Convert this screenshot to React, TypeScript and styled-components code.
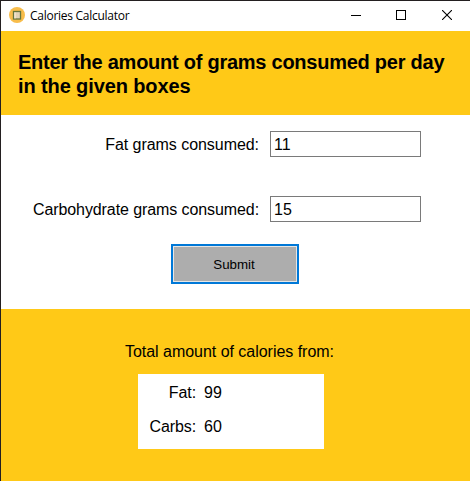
import React, { useState } from "react";
import styled, { createGlobalStyle } from "styled-components";

const GlobalStyle = createGlobalStyle`
  * { box-sizing: border-box; }
  body { margin: 0; overflow: hidden; }
`;

const Window = styled.div`
  display: flex;
  flex-direction: column;
  width: 470px;
  height: 481px;
  border: solid #231f20;
  border-width: 1px 0 0 1px;
  background: #fff;
  color: #000;
  font: 16px/20px "Liberation Sans", Arial, sans-serif;
`;

const TitleBar = styled.div`
  display: flex;
  align-items: center;
  height: 30px;
  flex: none;
  padding-left: 8px;
`;

const Title = styled.span`
  flex: 1;
  margin-left: 5px;
  font: 12px/16px "Open Sans", "Noto Sans", sans-serif;
  letter-spacing: -0.27px;
`;

const WindowButton = styled.button<{ $nudge?: number }>`
  display: grid;
  place-items: center;
  width: 46px;
  height: 30px;
  padding: 0 0 2px ${(p) => p.$nudge ?? 0}px;
  border: 0;
  background: none;
`;

const Header = styled.header`
  flex: none;
  height: 84px;
  padding: 19px 0 0 17px;
  background: #ffc917;
`;

const Heading = styled.h1`
  margin: 0;
  font-size: 20px;
  line-height: 24px;
  font-weight: bold;
  white-space: nowrap;
`;

const HeadingLine = styled.span<{ $tracking: number }>`
  display: block;
  letter-spacing: ${(p) => p.$tracking}px;
`;

const Form = styled.form`
  flex: none;
  display: flex;
  flex-direction: column;
  height: 194px;
  padding-top: 16px;
`;

const Field = styled.div`
  display: grid;
  grid-template-columns: 258px 151px;
  column-gap: 11px;
  height: 26px;
  margin-bottom: 39px;
  align-items: center;

  & + & {
    margin-bottom: 22px;
  }
`;

const Label = styled.label<{ $tracking: number }>`
  padding-top: 2px;
  text-align: right;
  white-space: nowrap;
  letter-spacing: ${(p) => p.$tracking}px;
`;

const Input = styled.input`
  width: 151px;
  height: 26px;
  padding: 2px 3px 0;
  border: 1px solid #7a7a7a;
  border-radius: 0;
  outline: 0;
  background: #fff;
  color: #000;
  font: inherit;
`;

const Submit = styled.button`
  width: 128px;
  height: 40px;
  margin-left: 170px;
  padding: 0 2px 0 0;
  border: 2px solid #0078d7;
  box-shadow: inset 0 0 0 1px #e6e6e6;
  background: #adadad;
  color: #000;
  font: 13.33px "Liberation Sans", Arial, sans-serif;
`;

const Results = styled.section`
  flex: 1;
  padding-top: 33px;
  background: #ffc917;
`;

const ResultsTitle = styled.div`
  margin: 0 0 12px 124px;
  white-space: nowrap;
  letter-spacing: -0.03px;
`;

const ResultsBox = styled.dl`
  display: grid;
  grid-template-columns: 58px 1fr;
  grid-auto-rows: 34px;
  column-gap: 8px;
  width: 186px;
  height: 75px;
  margin: 0 0 0 137px;
  padding-top: 2px;
  background: #fff;
  line-height: 34px;
`;

const Term = styled.dt`
  text-align: right;
  letter-spacing: -0.1px;
`;

const Value = styled.dd`
  margin: 0;
`;

const AppLogo = styled.svg`
  flex: none;
  margin-bottom: 2px;
`;

const AppIcon = () => (
  <AppLogo width="16" height="16" viewBox="0 0 16 16">
    <circle cx="8" cy="8" r="8" fill="#f8bd4b" />
    <rect x="4.5" y="4.5" width="7" height="7.5" fill="#e3d3b8" stroke="#66763c" strokeWidth="1.3" />
    <path d="M6 5.5v6" stroke="#fff2dc" />
  </AppLogo>
);

export default function App() {
  const [fat, setFat] = useState("11");
  const [carbs, setCarbs] = useState("15");
  const [totals, setTotals] = useState({ fat: 99, carbs: 60 });

  const submit = (e: React.FormEvent) => {
    e.preventDefault();
    setTotals({ fat: Number(fat) * 9, carbs: Number(carbs) * 4 });
  };

  return (
    <>
      <GlobalStyle />
      <Window>
        <TitleBar>
          <AppIcon />
          <Title>Calories Calculator</Title>
          <WindowButton aria-label="Minimize" $nudge={2}>
            <svg width="10" height="10" shapeRendering="crispEdges">
              <path d="M0 5.5h10" stroke="#000" />
            </svg>
          </WindowButton>
          <WindowButton aria-label="Maximize">
            <svg width="10" height="10" shapeRendering="crispEdges">
              <rect x=".5" y=".5" width="9" height="9" fill="none" stroke="#000" />
            </svg>
          </WindowButton>
          <WindowButton aria-label="Close">
            <svg width="10" height="10">
              <path d="M0 0l10 10M10 0L0 10" stroke="#000" strokeWidth="1.1" />
            </svg>
          </WindowButton>
        </TitleBar>
        <Header>
          <Heading>
            <HeadingLine $tracking={-0.25}>Enter the amount of grams consumed per day</HeadingLine>
            <HeadingLine $tracking={-0.11}>in the given boxes</HeadingLine>
          </Heading>
        </Header>
        <Form onSubmit={submit}>
          <Field>
            <Label htmlFor="fat" $tracking={-0.05}>Fat grams consumed:</Label>
            <Input id="fat" value={fat} onChange={(e) => setFat(e.target.value)} />
          </Field>
          <Field>
            <Label htmlFor="carbs" $tracking={-0.09}>Carbohydrate grams consumed:</Label>
            <Input id="carbs" value={carbs} onChange={(e) => setCarbs(e.target.value)} />
          </Field>
          <Submit type="submit">Submit</Submit>
        </Form>
        <Results>
          <ResultsTitle>Total amount of calories from:</ResultsTitle>
          <ResultsBox>
            <Term>Fat:</Term>
            <Value>{totals.fat}</Value>
            <Term>Carbs:</Term>
            <Value>{totals.carbs}</Value>
          </ResultsBox>
        </Results>
      </Window>
    </>
  );
}
